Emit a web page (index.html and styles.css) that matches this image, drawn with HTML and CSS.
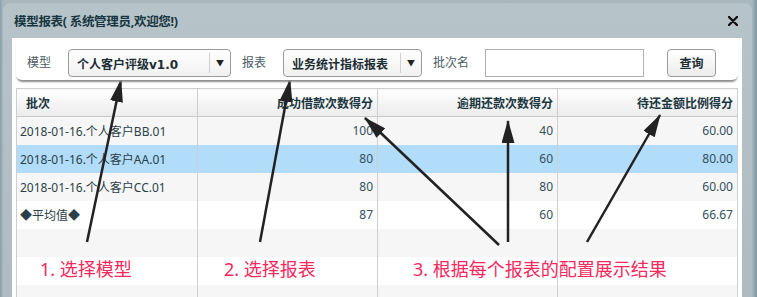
FILE: index.html
```html
<!DOCTYPE html>
<html>
<head>
    <meta charset="UTF-8">
    <title>模型报表</title>
    <link rel="stylesheet" href="styles.css">
</head>
<body>
    <div class="window">
        <div class="title-bar">
            <span class="title">模型报表( 系统管理员,欢迎您!)</span>
            <svg class="close" width="10" height="10" viewBox="0 0 10 10">
                <path d="M1,1 L9,9 M9,1 L1,9" stroke="#111" stroke-width="2.4" stroke-linecap="round"/>
            </svg>
        </div>

        <div class="panel">
            <div class="toolbar">
                <span class="label">模型</span>
                <div class="select select-model">
                    <span class="select-text">个人客户评级v1.0</span>
                    <span class="select-arrow">▼</span>
                </div>
                <span class="label">报表</span>
                <div class="select select-report">
                    <span class="select-text">业务统计指标报表</span>
                    <span class="select-arrow">▼</span>
                </div>
                <span class="label">批次名</span>
                <input class="batch-input" type="text">
                <button class="query-btn">查询</button>
            </div>

            <table class="grid">
                <colgroup>
                    <col style="width: 181px">
                    <col style="width: 180px">
                    <col style="width: 180px">
                    <col style="width: 180px">
                </colgroup>
                <thead>
                    <tr>
                        <th class="first">批次</th>
                        <th>成功借款次数得分</th>
                        <th>逾期还款次数得分</th>
                        <th>待还金额比例得分</th>
                    </tr>
                </thead>
                <tbody>
                    <tr class="odd">
                        <td class="first">2018-01-16.个人客户BB.01</td>
                        <td>100</td>
                        <td>40</td>
                        <td>60.00</td>
                    </tr>
                    <tr class="selected">
                        <td class="first">2018-01-16.个人客户AA.01</td>
                        <td>80</td>
                        <td>60</td>
                        <td>80.00</td>
                    </tr>
                    <tr class="odd">
                        <td class="first">2018-01-16.个人客户CC.01</td>
                        <td>80</td>
                        <td>80</td>
                        <td>60.00</td>
                    </tr>
                    <tr>
                        <td class="first">◆平均值◆</td>
                        <td>87</td>
                        <td>60</td>
                        <td>66.67</td>
                    </tr>
                    <tr class="odd"><td></td><td></td><td></td><td></td></tr>
                    <tr><td></td><td></td><td></td><td></td></tr>
                    <tr class="odd"><td></td><td></td><td></td><td></td></tr>
                </tbody>
            </table>
        </div>
    </div>

    <!-- annotation layer -->
    <svg class="notes" width="757" height="297" viewBox="0 0 757 297">
        <defs>
            <marker id="head" markerUnits="userSpaceOnUse" markerWidth="23" markerHeight="13" refX="22" refY="6.5" orient="auto">
                <path d="M0,0 L23,6.5 L0,13 z" fill="#222"/>
            </marker>
        </defs>
        <g stroke="#222" stroke-width="2.5" marker-end="url(#head)">
            <line x1="87" y1="242" x2="121" y2="80"/>
            <line x1="260" y1="242" x2="290" y2="80"/>
            <line x1="499" y1="245" x2="365" y2="118"/>
            <line x1="508" y1="242" x2="508" y2="121"/>
            <line x1="587" y1="242" x2="660" y2="115"/>
        </g>
        <g class="note-text">
            <text x="40" y="276">1. 选择模型</text>
            <text x="224" y="276">2. 选择报表</text>
            <text x="413" y="276">3. 根据每个报表的配置展示结果</text>
        </g>
    </svg>
</body>
</html>
```

FILE: styles.css
```css
* {
    margin: 0;
    padding: 0;
    box-sizing: border-box;
}

body {
    width: 757px;
    height: 297px;
    overflow: hidden;
    position: relative;
    background: linear-gradient(90deg, #8a9ea8 0, #a9b8bf 3px, #a9b8bf 752px, #7c94a0 757px);
    font-family: 'Noto Sans', 'Noto Sans CJK SC', sans-serif;
    font-size: 12px;
    color: #2e4450;
}

.window {
    margin: 3px 5px 0 3px;
    height: 294px;
    border-radius: 8px 8px 0 0;
    background: linear-gradient(180deg, #b6c4ca, #aebcc2);
    display: flex;
    flex-direction: column;
}

.title-bar {
    height: 35px;
    display: flex;
    align-items: center;
    justify-content: space-between;
    padding: 0 14px 0 11px;
}

.title {
    font-family: 'Noto Sans', 'Noto Sans CJK SC', sans-serif;
    font-size: 12.5px;
    font-weight: bold;
    letter-spacing: -0.3px;
    color: #163540;
}

.close {
    display: block;
}

.panel {
    flex: 1;
    margin: 0 10px 0 9px;
    background: #fff;
    padding: 0 4px;
    overflow: hidden;
}

.toolbar {
    height: 42px;
    display: flex;
    align-items: flex-start;
    padding: 11px 0 0 11px;
    background: #fff;
    border-radius: 0 0 6px 6px;
    box-shadow: 0 3px 2px -1px #8c8c8c;
    position: relative;
    z-index: 1;
}

.label {
    height: 27px;
    line-height: 27px;
    color: #4b5b66;
    margin-right: 17px;
}

.select {
    height: 28px;
    display: flex;
    align-items: center;
    border: 1px solid #9c9c9c;
    border-radius: 4px;
    background: linear-gradient(180deg, #ffffff, #f1f1f1);
    margin-right: 11px;
}

.select-model {
    width: 163px;
}

.select-report {
    width: 139px;
}

.select-text {
    flex: 1;
    padding-left: 8px;
    font-family: 'DejaVu Sans', 'Noto Sans CJK SC', sans-serif;
    font-weight: bold;
    font-size: 12px;
    color: #1b2c33;
    white-space: nowrap;
}

.select-arrow {
    width: 21px;
    height: 20px;
    line-height: 20px;
    text-align: center;
    border-left: 1px solid #d0d0d0;
    font-size: 8px;
    color: #222;
}

.batch-input {
    width: 159px;
    height: 28px;
    border: 1px solid #b0b0b0;
    margin-left: -1px;
    margin-right: 23px;
    outline: none;
}

.query-btn {
    width: 49px;
    height: 28px;
    border: 1px solid #9c9c9c;
    border-radius: 4px;
    background: linear-gradient(180deg, #ffffff, #ececec);
    font-family: 'Noto Sans', 'Noto Sans CJK SC', sans-serif;
    font-weight: bold;
    font-size: 12px;
    color: #1b2c33;
}

.grid {
    margin-top: 8px;
    border-collapse: collapse;
    table-layout: fixed;
    width: 722px;
}

.grid th,
.grid td {
    height: 28px;
    border: 1px solid #cfcfcf;
    border-top: none;
    border-bottom: none;
    text-align: right;
    padding: 0 4px 0 3px;
    white-space: nowrap;
    vertical-align: middle;
}

.grid th {
    border-top: 1px solid #cfcfcf;
    border-bottom: 1px solid #c8c8c8;
    background: linear-gradient(180deg, #ffffff, #ececec);
    font-weight: bold;
    color: #1a3640;
}

.grid th.first {
    text-align: left;
    padding-left: 9px;
}

.grid td {
    color: #34505c;
}

.grid td.first {
    text-align: left;
    color: #2a3f48;
}

.grid tr.odd td {
    background: #f6f6f6;
}

.grid tr.selected td {
    background: #b1dcfa;
}

.notes {
    position: absolute;
    top: 0;
    left: 0;
    pointer-events: none;
}

.note-text text {
    font-family: 'Noto Sans', 'Noto Sans CJK SC', sans-serif;
    font-size: 18px;
    fill: #f7285c;
}
```
